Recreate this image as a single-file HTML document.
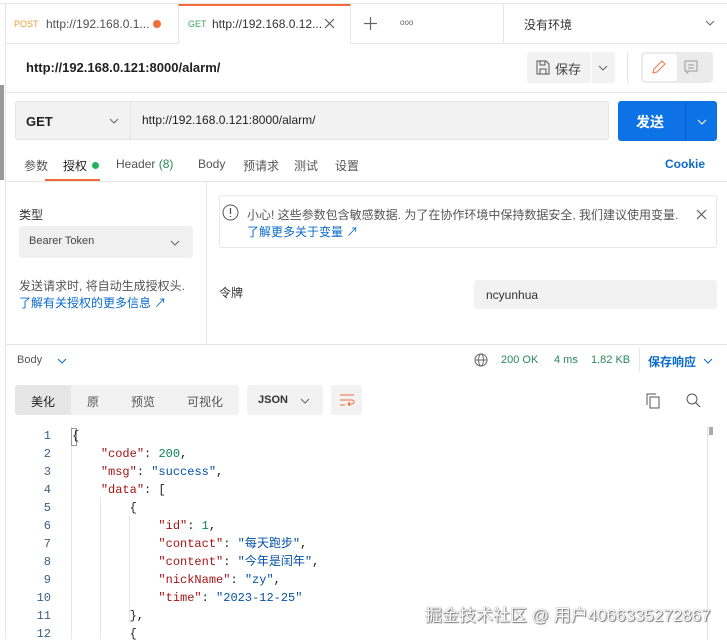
<!DOCTYPE html>
<html><head><meta charset="utf-8"><style>
*{margin:0;padding:0;box-sizing:border-box}
body{width:727px;height:639px;overflow:hidden;background:#fff;font-family:"Liberation Sans","Noto Sans CJK SC",sans-serif;font-size:12px;color:#212121;position:relative}
.a{position:absolute;white-space:nowrap}
.hl{position:absolute;height:1px;background:#e6e6e6}
.vl{position:absolute;width:1px;background:#e6e6e6}
.k{color:#a31515}.s{color:#0451a5}.n{color:#098658}
.ln{position:absolute;left:20px;width:31px;text-align:right;color:#3b5e86;font-family:"Liberation Mono",monospace;font-size:12px;line-height:18px;height:18px}
.cl{position:absolute;left:72px;font-family:"Liberation Mono","Noto Sans CJK SC",monospace;font-size:12px;white-space:pre;color:#212121;line-height:18px;height:18px}
</style></head><body>
<div class="hl" style="left:0;top:3px;width:727px"></div>
<div class="vl" style="left:5px;top:3px;height:636px"></div>
<div class="a" style="left:0;top:85px;width:4px;height:95px;background:#9a9a9a"></div>
<!-- tabs -->
<div class="a" style="left:178px;top:4px;width:173px;height:40px;background:#fff;border-top:2px solid #f26b3a;border-left:1px solid #e6e6e6;border-right:1px solid #e6e6e6"></div>
<div class="hl" style="left:5px;top:43px;width:173px"></div>
<div class="hl" style="left:351px;top:43px;width:376px"></div>
<div class="a" style="left:14px;top:19px;font-size:9px;color:#f0a030">POST</div>
<div class="a" style="left:46px;top:17px;font-size:12px;color:#505050">http://192.168.0.1...</div>
<div class="a" style="left:153px;top:20px;width:8px;height:8px;border-radius:50%;background:#f26b3a"></div>
<div class="a" style="left:188px;top:19px;font-size:9px;color:#3f9e6b">GET</div>
<div class="a" style="left:212px;top:17px;font-size:12px;color:#333">http://192.168.0.12...</div>
<svg class="a" style="left:324px;top:18px" width="11" height="11"><path d="M1 1L10 10M10 1L1 10" stroke="#555" stroke-width="1.1"/></svg>
<svg class="a" style="left:364px;top:17px" width="13" height="13"><path d="M6.5 0V13M0 6.5H13" stroke="#666" stroke-width="1.2"/></svg>
<div class="a" style="left:400px;top:18px;font-size:8px;color:#666">ooo</div>
<div class="vl" style="left:503px;top:4px;height:40px"></div>
<div class="a" style="left:524px;top:16px;font-size:12px;color:#333">没有环境</div>
<svg class="a" style="left:705px;top:20px" width="10" height="6"><path d="M1 1L5 5L9 1" stroke="#666" fill="none"/></svg>
<!-- title row -->
<div class="a" style="left:26px;top:60px;font-size:13px;font-weight:bold;color:#212121">http://192.168.0.121:8000/alarm/</div>
<div class="a" style="left:527px;top:52px;width:88px;height:31px;background:#f2f2f2;border-radius:3px"></div>
<div class="vl" style="left:591px;top:52px;height:31px;background:#fff"></div>
<svg class="a" style="left:536px;top:60px" width="14" height="15"><path d="M1 1H10L13 4V14H1Z M4 1V5H9V1 M4 14V9H10V14" stroke="#555" fill="none"/></svg>
<div class="a" style="left:555px;top:59px;font-size:13px;color:#444">保存</div>
<svg class="a" style="left:598px;top:65px" width="10" height="6"><path d="M1 1L5 5L9 1" stroke="#666" fill="none"/></svg>
<div class="vl" style="left:627px;top:52px;height:31px"></div>
<div class="a" style="left:641px;top:52px;width:72px;height:31px;background:#ebebeb;border-radius:4px"></div>
<div class="a" style="left:643px;top:54px;width:34px;height:27px;background:#fff;border-radius:3px"></div>
<svg class="a" style="left:651px;top:59px" width="16" height="16"><path d="M2 14L3 10L11 2L14 5L6 13Z" stroke="#f07850" fill="none" stroke-width="1.1"/></svg>
<svg class="a" style="left:684px;top:60px" width="14" height="14"><path d="M1 1H13V11H5L3 13V11H1Z M4 5H10M4 8H10" stroke="#999" fill="none"/></svg>
<div class="hl" style="left:5px;top:92px;width:722px"></div>
<!-- request row -->
<div class="a" style="left:15px;top:101px;width:594px;height:39px;background:#f2f2f2;border:1px solid #e3e3e3;border-radius:3px"></div>
<div class="vl" style="left:130px;top:102px;height:37px;background:#e3e3e3"></div>
<div class="a" style="left:26px;top:114px;font-size:13px;font-weight:bold;color:#212121">GET</div>
<svg class="a" style="left:109px;top:118px" width="10" height="6"><path d="M1 1L5 5L9 1" stroke="#666" fill="none"/></svg>
<div class="a" style="left:142px;top:113px;font-size:12px;color:#212121">http://192.168.0.121:8000/alarm/</div>
<div class="a" style="left:618px;top:101px;width:99px;height:40px;background:#0c72e6;border-radius:3px"></div>
<div class="vl" style="left:685px;top:101px;height:40px;background:#0a62c8"></div>
<div class="a" style="left:636px;top:112px;font-size:14px;font-weight:bold;color:#fff">发送</div>
<svg class="a" style="left:697px;top:119px" width="10" height="6"><path d="M1 1L5 5L9 1" stroke="#fff" fill="none"/></svg>
<!-- sub tabs -->
<div class="a" style="left:24px;top:157px;font-size:12px;color:#555">参数</div>
<div class="a" style="left:63px;top:157px;font-size:12px;color:#212121">授权</div>
<div class="a" style="left:92px;top:162px;width:7px;height:7px;border-radius:50%;background:#1fb35a"></div>
<div class="a" style="left:116px;top:157px;font-size:12px;color:#555">Header <span style="color:#2a8a5a">(8)</span></div>
<div class="a" style="left:198px;top:157px;font-size:12px;color:#555">Body</div>
<div class="a" style="left:243px;top:157px;font-size:12px;color:#555">预请求</div>
<div class="a" style="left:294px;top:157px;font-size:12px;color:#555">测试</div>
<div class="a" style="left:335px;top:157px;font-size:12px;color:#555">设置</div>
<div class="a" style="left:665px;top:157px;font-size:12px;color:#0b6bcb;font-weight:bold">Cookie</div>
<div class="a" style="left:45px;top:179px;width:55px;height:2px;background:#f26b3a"></div>
<div class="hl" style="left:5px;top:181px;width:722px"></div>
<!-- auth -->
<div class="vl" style="left:206px;top:181px;height:163px"></div>
<div class="a" style="left:19px;top:206px;font-size:12px;color:#333">类型</div>
<div class="a" style="left:19px;top:226px;width:174px;height:32px;background:#f0f0f0;border-radius:3px"></div>
<div class="a" style="left:29px;top:235px;font-size:11px;color:#444">Bearer Token</div>
<svg class="a" style="left:170px;top:240px" width="10" height="6"><path d="M1 1L5 5L9 1" stroke="#666" fill="none"/></svg>
<div class="a" style="left:19px;top:277px;font-size:12px;color:#555">发送请求时, 将自动生成授权头.</div>
<div class="a" style="left:19px;top:294px;font-size:12px;color:#0b6bcb">了解有关授权的更多信息 ↗</div>
<div class="a" style="left:219px;top:195px;width:498px;height:53px;border:1px solid #e8e8e8;border-radius:3px"></div>
<svg class="a" style="left:222px;top:204px" width="17" height="17"><circle cx="8.5" cy="8.5" r="7.5" stroke="#555" fill="none"/><path d="M8.5 4V10M8.5 12V13" stroke="#555" stroke-width="1.3"/></svg>
<div class="a" style="left:247px;top:206px;font-size:12px;color:#555">小心! 这些参数包含敏感数据. 为了在协作环境中保持数据安全, 我们建议使用变量.</div>
<div class="a" style="left:247px;top:223px;font-size:12px;color:#0b6bcb">了解更多关于变量 ↗</div>
<svg class="a" style="left:696px;top:209px" width="11" height="11"><path d="M1 1L10 10M10 1L1 10" stroke="#555" stroke-width="1.1"/></svg>
<div class="a" style="left:219px;top:284px;font-size:12px;color:#333">令牌</div>
<div class="a" style="left:474px;top:280px;width:243px;height:29px;background:#f2f2f2;border-radius:3px"></div>
<div class="a" style="left:486px;top:288px;font-size:12px;color:#333">ncyunhua</div>
<div class="hl" style="left:5px;top:344px;width:722px"></div>
<!-- response bar -->
<div class="a" style="left:17px;top:354px;font-size:11px;color:#555">Body</div>
<svg class="a" style="left:57px;top:358px" width="10" height="6"><path d="M1 1L5 5L9 1" stroke="#0b6bcb" fill="none"/></svg>
<svg class="a" style="left:474px;top:353px" width="14" height="14"><circle cx="7" cy="7" r="6" stroke="#666" fill="none"/><ellipse cx="7" cy="7" rx="2.5" ry="6" stroke="#666" fill="none"/><path d="M1 7H13" stroke="#666"/></svg>
<div class="a" style="left:501px;top:354px;font-size:11px;color:#2a8a5a">200 OK</div>
<div class="a" style="left:554px;top:354px;font-size:11px;color:#2a8a5a">4 ms</div>
<div class="a" style="left:591px;top:354px;font-size:11px;color:#2a8a5a">1.82 KB</div>
<div class="vl" style="left:639px;top:348px;height:24px"></div>
<div class="a" style="left:648px;top:353px;font-size:12px;color:#0b6bcb;font-weight:bold">保存响应</div>
<svg class="a" style="left:703px;top:358px" width="10" height="6"><path d="M1 1L5 5L9 1" stroke="#0b6bcb" fill="none"/></svg>
<div class="a" style="left:15px;top:385px;width:224px;height:30px;background:#f2f2f2;border-radius:3px"></div>
<div class="a" style="left:15px;top:385px;width:56px;height:30px;background:#e6e6e6;border-radius:3px 0 0 3px"></div>
<div class="a" style="left:31px;top:393px;font-size:12px;color:#212121">美化</div>
<div class="a" style="left:87px;top:393px;font-size:12px;color:#555">原</div>
<div class="a" style="left:131px;top:393px;font-size:12px;color:#555">预览</div>
<div class="a" style="left:187px;top:393px;font-size:12px;color:#555">可视化</div>
<div class="a" style="left:247px;top:385px;width:76px;height:30px;background:#f2f2f2;border-radius:3px"></div>
<div class="a" style="left:258px;top:394px;font-size:11px;color:#333;font-weight:bold">JSON</div>
<svg class="a" style="left:300px;top:398px" width="10" height="6"><path d="M1 1L5 5L9 1" stroke="#666" fill="none"/></svg>
<div class="a" style="left:331px;top:385px;width:31px;height:30px;background:#f2f2f2;border-radius:3px"></div>
<svg class="a" style="left:339px;top:393px" width="16" height="14"><path d="M1 2H15M1 7H13A2 2 0 0 1 13 11H9M11 9L9 11L11 13M1 12H6" stroke="#f26b3a" fill="none"/></svg>
<svg class="a" style="left:646px;top:393px" width="14" height="16"><rect x="4" y="4" width="9" height="11" stroke="#555" fill="none"/><path d="M1 12V1H10" stroke="#555" fill="none"/></svg>
<svg class="a" style="left:686px;top:393px" width="15" height="15"><circle cx="6" cy="6" r="5" stroke="#555" fill="none"/><path d="M9.5 9.5L14 14" stroke="#555" stroke-width="1.2"/></svg>
<!-- code -->
<div class="a" style="left:707px;top:426px;width:6px;height:213px;border-left:1px solid #e0e0e0"></div>
<div class="a" style="left:709px;top:427px;width:4px;height:8px;background:#aaa"></div>
<div class="vl" style="left:71px;top:426px;height:213px"></div>
<div class="vl" style="left:100px;top:497px;height:142px"></div>
<div class="vl" style="left:129px;top:516px;height:106px"></div>
<div class="a" style="left:71px;top:428px;width:6px;height:18px;border:1px solid #999"></div>
<div class="ln" style="top:427px">1</div><div class="cl" style="top:427px">{</div>
<div class="ln" style="top:445px">2</div><div class="cl" style="top:445px">    <span class="k">"code"</span>: <span class="n">200</span>,</div>
<div class="ln" style="top:463px">3</div><div class="cl" style="top:463px">    <span class="k">"msg"</span>: <span class="s">"success"</span>,</div>
<div class="ln" style="top:481px">4</div><div class="cl" style="top:481px">    <span class="k">"data"</span>: [</div>
<div class="ln" style="top:499px">5</div><div class="cl" style="top:499px">        {</div>
<div class="ln" style="top:517px">6</div><div class="cl" style="top:517px">            <span class="k">"id"</span>: <span class="n">1</span>,</div>
<div class="ln" style="top:535px">7</div><div class="cl" style="top:535px">            <span class="k">"contact"</span>: <span class="s">"每天跑步"</span>,</div>
<div class="ln" style="top:553px">8</div><div class="cl" style="top:553px">            <span class="k">"content"</span>: <span class="s">"今年是闰年"</span>,</div>
<div class="ln" style="top:571px">9</div><div class="cl" style="top:571px">            <span class="k">"nickName"</span>: <span class="s">"zy"</span>,</div>
<div class="ln" style="top:589px">10</div><div class="cl" style="top:589px">            <span class="k">"time"</span>: <span class="s">"2023-12-25"</span></div>
<div class="ln" style="top:607px">11</div><div class="cl" style="top:607px">        },</div>
<div class="ln" style="top:625px">12</div><div class="cl" style="top:625px">        {</div>
<div class="a" style="left:425px;top:601px;font-size:17px;color:#fff;text-shadow:0 0 1px #555,1px 1px 1px #777">掘金技术社区 @ 用户4066335272867</div>
</body></html>
